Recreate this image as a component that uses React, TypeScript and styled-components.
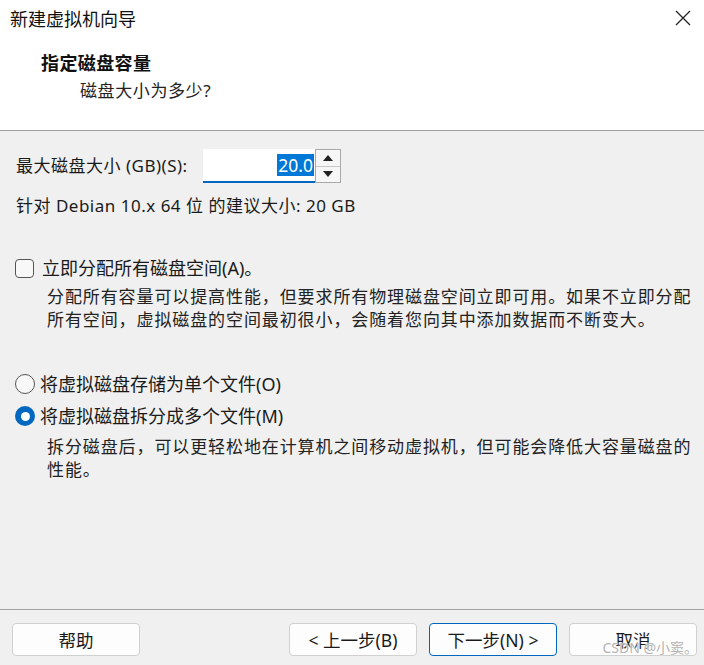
import React from 'react';
import styled, { createGlobalStyle } from 'styled-components';

const GlobalStyle = createGlobalStyle`
  html, body {
    margin: 0;
    padding: 0;
    background: #f0f0f0;
  }
  * {
    box-sizing: border-box;
  }
`;

const Window = styled.div`
  position: relative;
  width: 704px;
  height: 665px;
  display: flex;
  flex-direction: column;
  background: #f0f0f0;
  font-family: "Noto Sans", "Noto Sans CJK SC", sans-serif;
  color: #1a1a1a;
  overflow: hidden;
`;

const Header = styled.div`
  height: 131px;
  background: #fff;
  border-bottom: 1px solid #a0a0a0;
  display: flex;
  flex-direction: column;
`;

const TitleBar = styled.div`
  height: 36px;
  display: flex;
  align-items: center;
  justify-content: space-between;
  padding: 0 10px 0 10px;
  font-size: 18px;
  color: #111;
`;

const CloseButton = styled.div`
  width: 22px;
  height: 22px;
  display: flex;
  align-items: center;
  justify-content: center;
`;

const PageTitle = styled.div`
  margin: 15px 0 0 41px;
  font-size: 18px;
  font-weight: 700;
  line-height: 24px;
  color: #111;
  letter-spacing: 0.4px;
`;

const PageSubtitle = styled.div`
  margin: 4px 0 0 80px;
  font-size: 17px;
  line-height: 24px;
  color: #222;
  letter-spacing: 0.6px;
`;

const Body = styled.div`
  flex: 1;
  display: flex;
  flex-direction: column;
  padding: 18px 0 0 16px;
`;

const Row = styled.div<{ $top?: number }>`
  display: flex;
  align-items: center;
  margin-top: ${(p) => p.$top ?? 0}px;
  font-size: 17px;
  line-height: 24px;
  letter-spacing: 0.5px;
`;

const SizeLabel = styled.span`
  width: 187px;
`;

const SpinBox = styled.div`
  display: flex;
  height: 34px;
`;

const Input = styled.div`
  width: 112px;
  height: 34px;
  background: #fff;
  border-bottom: 2px solid #0067c0;
  display: flex;
  align-items: center;
  justify-content: flex-end;
  padding-right: 1px;
`;

const Selected = styled.span`
  background: #0078d7;
  color: #fff;
  font-size: 17.5px;
  line-height: 22px;
  padding: 0 1px;
  letter-spacing: 0;
`;

const SpinButtons = styled.div`
  display: flex;
  flex-direction: column;
  width: 26px;
  border: 1px solid #a9a9a9;
`;

const SpinButton = styled.div<{ $bottom?: boolean }>`
  flex: 1;
  display: flex;
  align-items: center;
  justify-content: center;
  background: #f6f6f6;
  border-top: ${(p) => (p.$bottom ? '1px solid #c8c8c8' : 'none')};
`;

const Option = styled.div<{ $top: number }>`
  display: flex;
  align-items: center;
  margin-top: ${(p) => p.$top}px;
  margin-left: -1px;
  font-size: 18px;
  line-height: 24px;
`;

const CheckBox = styled.span`
  width: 19px;
  height: 19px;
  border: 1px solid #555;
  border-radius: 4px;
  background: #f8f8f8;
  margin-right: 8px;
`;

const Radio = styled.span<{ $checked?: boolean }>`
  width: 20px;
  height: 20px;
  border-radius: 50%;
  margin-right: 5px;
  display: flex;
  align-items: center;
  justify-content: center;
  border: ${(p) => (p.$checked ? 'none' : '1px solid #555')};
  background: ${(p) => (p.$checked ? '#0067c0' : '#f8f8f8')};

  &::after {
    content: '';
    display: ${(p) => (p.$checked ? 'block' : 'none')};
    width: 9px;
    height: 9px;
    border-radius: 50%;
    background: #fff;
  }
`;

const Description = styled.div<{ $top: number }>`
  margin: ${(p) => p.$top}px 0 0 31px;
  font-size: 17px;
  line-height: 23px;
  color: #222;
  letter-spacing: 0.9px;
  white-space: nowrap;
`;

const Footer = styled.div`
  height: 56px;
  border-top: 1px solid #a0a0a0;
  display: flex;
  align-items: flex-start;
  padding: 13px 7px 0 12px;
`;

const Button = styled.button<{ $primary?: boolean }>`
  width: 128px;
  height: 33px;
  background: #fdfdfd;
  border: 1px solid ${(p) => (p.$primary ? '#0067c0' : '#d0d0d0')};
  border-radius: 4px;
  font-family: "Noto Sans", "Noto Sans CJK SC", sans-serif;
  font-size: 17.5px;
  color: #1a1a1a;
  padding: 0;
  display: flex;
  align-items: center;
  justify-content: center;
`;

const Spacer = styled.div`
  flex: 1;
`;

const ButtonGroup = styled.div`
  display: flex;
  gap: 12px;
`;

const Watermark = styled.div`
  position: absolute;
  right: 6px;
  bottom: 8px;
  font-family: "Noto Sans", "Noto Sans CJK SC", sans-serif;
  font-size: 14px;
  color: #b4b4b4;
  text-shadow: 0 0 2px #fff, 0 0 1px #fff;
  pointer-events: none;
`;

const Triangle = ({ up }: { up?: boolean }) => (
  <svg width="10" height="6" viewBox="0 0 10 6">
    <polygon points={up ? '0,6 10,6 5,0' : '0,0 10,0 5,6'} fill="#222" />
  </svg>
);

export default function App() {
  return (
    <>
      <GlobalStyle />
      <Window>
        <Header>
          <TitleBar>
            <span>新建虚拟机向导</span>
            <CloseButton>
              <svg width="16" height="16" viewBox="0 0 16 16">
                <path d="M1 1 L15 15 M15 1 L1 15" stroke="#222" strokeWidth="1.3" />
              </svg>
            </CloseButton>
          </TitleBar>
          <PageTitle>指定磁盘容量</PageTitle>
          <PageSubtitle>磁盘大小为多少?</PageSubtitle>
        </Header>

        <Body>
          <Row>
            <SizeLabel>最大磁盘大小 (GB)(S):</SizeLabel>
            <SpinBox>
              <Input>
                <Selected>20.0</Selected>
              </Input>
              <SpinButtons>
                <SpinButton>
                  <Triangle up />
                </SpinButton>
                <SpinButton $bottom>
                  <Triangle />
                </SpinButton>
              </SpinButtons>
            </SpinBox>
          </Row>
          <Row $top={11}>针对 Debian 10.x 64 位 的建议大小: 20 GB</Row>

          <Option $top={38}>
            <CheckBox />
            立即分配所有磁盘空间(A)。
          </Option>
          <Description $top={5}>
            分配所有容量可以提高性能，但要求所有物理磁盘空间立即可用。如果不立即分配
            <br />
            所有空间，虚拟磁盘的空间最初很小，会随着您向其中添加数据而不断变大。
          </Description>

          <Option $top={41}>
            <Radio />
            将虚拟磁盘存储为单个文件(O)
          </Option>
          <Option $top={8}>
            <Radio $checked />
            将虚拟磁盘拆分成多个文件(M)
          </Option>
          <Description $top={7}>
            拆分磁盘后，可以更轻松地在计算机之间移动虚拟机，但可能会降低大容量磁盘的
            <br />
            性能。
          </Description>
        </Body>

        <Footer>
          <Button>帮助</Button>
          <Spacer />
          <ButtonGroup>
            <Button>&lt; 上一步(B)</Button>
            <Button $primary>下一步(N) &gt;</Button>
            <Button>取消</Button>
          </ButtonGroup>
        </Footer>
        <Watermark>CSDN @小窦。</Watermark>
      </Window>
    </>
  );
}
